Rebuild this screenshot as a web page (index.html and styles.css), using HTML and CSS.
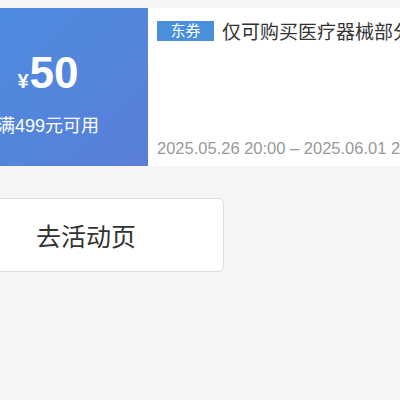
FILE: index.html
```html
<!DOCTYPE html>
<html lang="zh-CN">
<head>
    <meta charset="UTF-8">
    <meta name="viewport" content="width=device-width, initial-scale=1.0">
    <title>优惠券</title>
    <link rel="stylesheet" href="styles.css">
</head>
<body>
    <div class="page">
        <div class="coupon">
            <div class="coupon-value">
                <div class="amount"><span class="yen">¥</span>50</div>
                <div class="limit">满499元可用</div>
            </div>
            <div class="coupon-info">
                <div class="title-row">
                    <span class="tag">东券</span>
                    <span class="title">仅可购买医疗器械部分商品</span>
                </div>
                <div class="date">2025.05.26 20:00 – 2025.06.01 23:59</div>
            </div>
        </div>
        <button class="go-btn">去活动页</button>
    </div>
</body>
</html>
```

FILE: styles.css
```css
body {
    margin: 0;
    padding-top: 8px;
    background-color: #f5f5f5;
    font-family: 'Liberation Sans', 'Noto Sans CJK SC', sans-serif;
    overflow: hidden;
}
.page {
    margin-left: -52px;
    width: 700px;
}
.coupon {
    display: flex;
    height: 158px;
}
.coupon-value {
    width: 200px;
    padding-top: 43px;
    box-sizing: border-box;
    background: linear-gradient(135deg, #4a8ee1, #5a7ed8);
    color: #fff;
    display: flex;
    flex-direction: column;
    align-items: center;
}
.amount {
    font-size: 44px;
    font-weight: bold;
    line-height: 44px;
}
.yen {
    font-size: 20px;
    margin-right: 1px;
}
.limit {
    font-size: 18px;
    line-height: 18px;
    margin-top: 14px;
}
.coupon-info {
    flex: 1;
    background: #fff;
    padding: 9px 0 8px 9px;
    display: flex;
    flex-direction: column;
    justify-content: space-between;
}
.title-row {
    display: flex;
    align-items: center;
    white-space: nowrap;
}
.tag {
    background: #4a8fdc;
    color: #fff;
    font-size: 15px;
    width: 57px;
    height: 20px;
    line-height: 20px;
    text-align: center;
}
.title {
    margin-left: 8px;
    font-size: 19px;
    color: #333;
}
.date {
    font-size: 16.5px;
    color: #999;
    white-space: nowrap;
}
.go-btn {
    display: block;
    margin-top: 32px;
    width: 276px;
    height: 74px;
    background: #fff;
    border: 1px solid #ddd;
    border-radius: 6px;
    font-family: 'Liberation Sans', 'Noto Sans CJK SC', sans-serif;
    font-size: 25px;
    color: #333;
}
```
